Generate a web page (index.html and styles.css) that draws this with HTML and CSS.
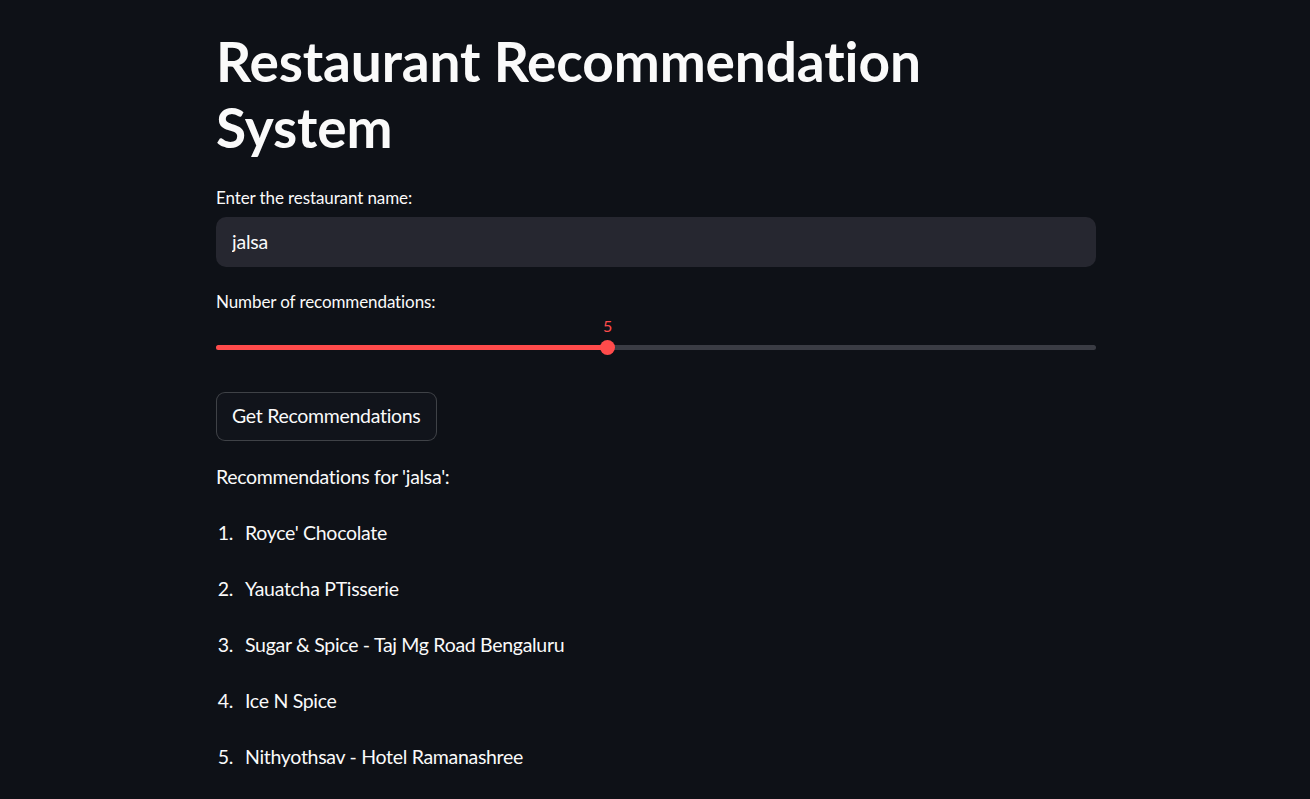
FILE: index.html
```html
<!DOCTYPE html>
<html lang="en">
<head>
<meta charset="utf-8">
<title>Restaurant Recommendation System</title>
<link rel="stylesheet" href="styles.css">
</head>
<body>
<main class="page">
  <h1 class="title">Restaurant Recommendation System</h1>

  <label class="field-label" for="name">Enter the restaurant name:</label>
  <div class="input-box"><input id="name" class="text-input" type="text" value="jalsa"></div>

  <div class="field-label slider-label">Number of recommendations:</div>
  <div class="slider">
    <div class="track">
      <div class="fill" style="width: 44.44%"></div>
      <div class="thumb" style="left: 44.44%">
        <span class="thumb-value">5</span>
      </div>
    </div>
  </div>

  <button class="btn" type="button">Get Recommendations</button>

  <p class="result-head">Recommendations for 'jalsa':</p>

  <ol class="results">
    <li class="result"><span class="num">1.</span><span>Royce' Chocolate</span></li>
    <li class="result"><span class="num">2.</span><span>Yauatcha PTisserie</span></li>
    <li class="result"><span class="num">3.</span><span>Sugar &amp; Spice - Taj Mg Road Bengaluru</span></li>
    <li class="result"><span class="num">4.</span><span>Ice N Spice</span></li>
    <li class="result"><span class="num">5.</span><span>Nithyothsav - Hotel Ramanashree</span></li>
  </ol>
</main>
</body>
</html>
```

FILE: styles.css
```css
html, body {
  margin: 0;
  padding: 0;
  background: #0e1117;
  color: #fafafa;
  font-family: "Lato", "Liberation Sans", sans-serif;
  font-variant-ligatures: none;
  height: 100%;
  overflow: hidden;
}

.page {
  width: 880px;
  margin-left: calc(50% - 439px);
  padding-top: 28px;
  display: flex;
  flex-direction: column;
  align-items: stretch;
}

.title {
  margin: 0;
  font-size: 55px;
  line-height: 66px;
  font-weight: 700;
  letter-spacing: -0.12px;
  width: 730px;
}

.field-label {
  display: block;
  font-size: 17px;
  line-height: 22px;
  letter-spacing: -0.1px;
  margin-top: 27px;
}

.slider-label {
  margin-top: 24px;
}

.input-box {
  margin-top: 8px;
  height: 50px;
  background: #262730;
  border-radius: 10px;
  display: flex;
  align-items: center;
}

.text-input {
  flex: 1;
  background: transparent;
  border: none;
  outline: none;
  color: #fafafa;
  font-family: inherit;
  font-size: 19.5px;
  letter-spacing: -0.2px;
  padding: 0 16px;
  margin-top: -2px;
}

.slider {
  height: 48px;
  position: relative;
}

.track {
  position: relative;
  margin-top: 32px;
  height: 5px;
  border-radius: 3px;
  background: #3a3c44;
}

.fill {
  height: 100%;
  background: #ff4b4b;
  border-radius: 3px;
}

.thumb {
  position: absolute;
  top: 50%;
  width: 15px;
  height: 15px;
  margin-left: -7px;
  margin-top: -7.5px;
  border-radius: 50%;
  background: #ff4b4b;
}

.thumb-value {
  position: absolute;
  bottom: 19px;
  left: 50%;
  transform: translateX(-50%);
  color: #ff4b4b;
  font-size: 16px;
  line-height: 20px;
}

.btn {
  align-self: flex-start;
  margin-top: 31px;
  height: 49px;
  padding: 0 15px 3px;
  background: #11141b;
  border: 1px solid rgba(250, 250, 250, 0.2);
  border-radius: 9px;
  color: #fafafa;
  font-family: inherit;
  font-size: 19.5px;
  letter-spacing: -0.3px;
}

.result-head {
  margin: 20px 0 0;
  font-size: 19.5px;
  letter-spacing: -0.3px;
  line-height: 32px;
}

.results {
  list-style: none;
  margin: 24px 0 0;
  padding: 0;
  display: flex;
  flex-direction: column;
  gap: 24px;
}

.result {
  display: flex;
  font-size: 19.5px;
  letter-spacing: -0.3px;
  line-height: 32px;
}

.num {
  width: 17px;
  text-align: right;
  margin-right: 12px;
}
```
